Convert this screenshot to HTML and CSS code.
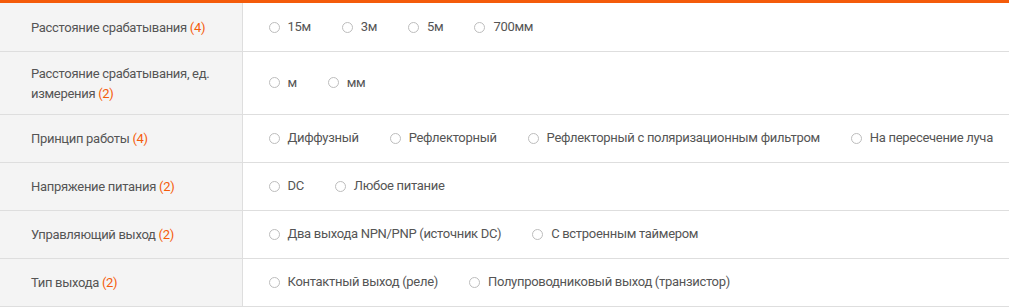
FILE: index.html
```html
<!DOCTYPE html>
<html lang="ru">
<head>
  <meta charset="UTF-8" />
  <title>Фильтр</title>
  <link rel="stylesheet" href="styles.css">
</head>
<body>
  <div class="props-wrap">
    <table class="props">
      <colgroup>
        <col class="name-col">
        <col>
      </colgroup>
      <tr>
        <th>Расстояние срабатывания <span class="count">(4)</span></th>
        <td>
          <label class="opt"><input type="radio" name="dist"> 15м</label>
          <label class="opt"><input type="radio" name="dist"> 3м</label>
          <label class="opt"><input type="radio" name="dist"> 5м</label>
          <label class="opt"><input type="radio" name="dist"> 700мм</label>
        </td>
      </tr>
      <tr class="tall">
        <th>Расстояние срабатывания, ед. измерения <span class="count">(2)</span></th>
        <td>
          <label class="opt"><input type="radio" name="unit"> м</label>
          <label class="opt"><input type="radio" name="unit"> мм</label>
        </td>
      </tr>
      <tr>
        <th>Принцип работы <span class="count">(4)</span></th>
        <td>
          <label class="opt"><input type="radio" name="mode"> Диффузный</label>
          <label class="opt"><input type="radio" name="mode"> Рефлекторный</label>
          <label class="opt"><input type="radio" name="mode"> Рефлекторный с поляризационным фильтром</label>
          <label class="opt"><input type="radio" name="mode"> На пересечение луча</label>
        </td>
      </tr>
      <tr>
        <th>Напряжение питания <span class="count">(2)</span></th>
        <td>
          <label class="opt"><input type="radio" name="power"> DC</label>
          <label class="opt"><input type="radio" name="power"> Любое питание</label>
        </td>
      </tr>
      <tr>
        <th>Управляющий выход <span class="count">(2)</span></th>
        <td>
          <label class="opt"><input type="radio" name="ctrl"> Два выхода NPN/PNP (источник DC)</label>
          <label class="opt"><input type="radio" name="ctrl"> С встроенным таймером</label>
        </td>
      </tr>
      <tr>
        <th>Тип выхода <span class="count">(2)</span></th>
        <td>
          <label class="opt"><input type="radio" name="out"> Контактный выход (реле)</label>
          <label class="opt"><input type="radio" name="out"> Полупроводниковый выход (транзистор)</label>
        </td>
      </tr>
    </table>
  </div>
</body>
</html>
```

FILE: styles.css
```css
body {
  margin: 0;
  padding: 0;
  background: #fff;
  font-family: Roboto, "Noto Sans", sans-serif;
  font-size: 13px;
  letter-spacing: -0.3px;
  color: #555;
}

.props-wrap {
  border-top: 3px solid #f45b0a;
}

.props {
  width: 100%;
  table-layout: fixed;
  border-collapse: collapse;
}

.name-col {
  width: 242px;
}

.props tr {
  border-bottom: 1px solid #dedede;
}

.props th,
.props td {
  height: 48px;
  padding: 12px 0 10px;
  line-height: 20px;
  vertical-align: middle;
  text-align: left;
  font-weight: normal;
  box-sizing: border-box;
}

.props th {
  padding-left: 31px;
  padding-right: 14px;
  background: #f4f4f4;
  border-right: 1px solid #dedede;
}

.props td {
  padding-left: 26px;
  white-space: nowrap;
}

.props .tall th,
.props .tall td {
  height: 63px;
}

.count {
  color: #f45b0a;
}

.opt {
  display: inline-flex;
  align-items: center;
  margin-right: 28px;
  white-space: nowrap;
  cursor: pointer;
}

.opt input {
  appearance: none;
  width: 11px;
  height: 11px;
  margin: 0 8px 0 0;
  border: 1px solid #bdbdbd;
  border-radius: 50%;
  background: #fff;
}
```
